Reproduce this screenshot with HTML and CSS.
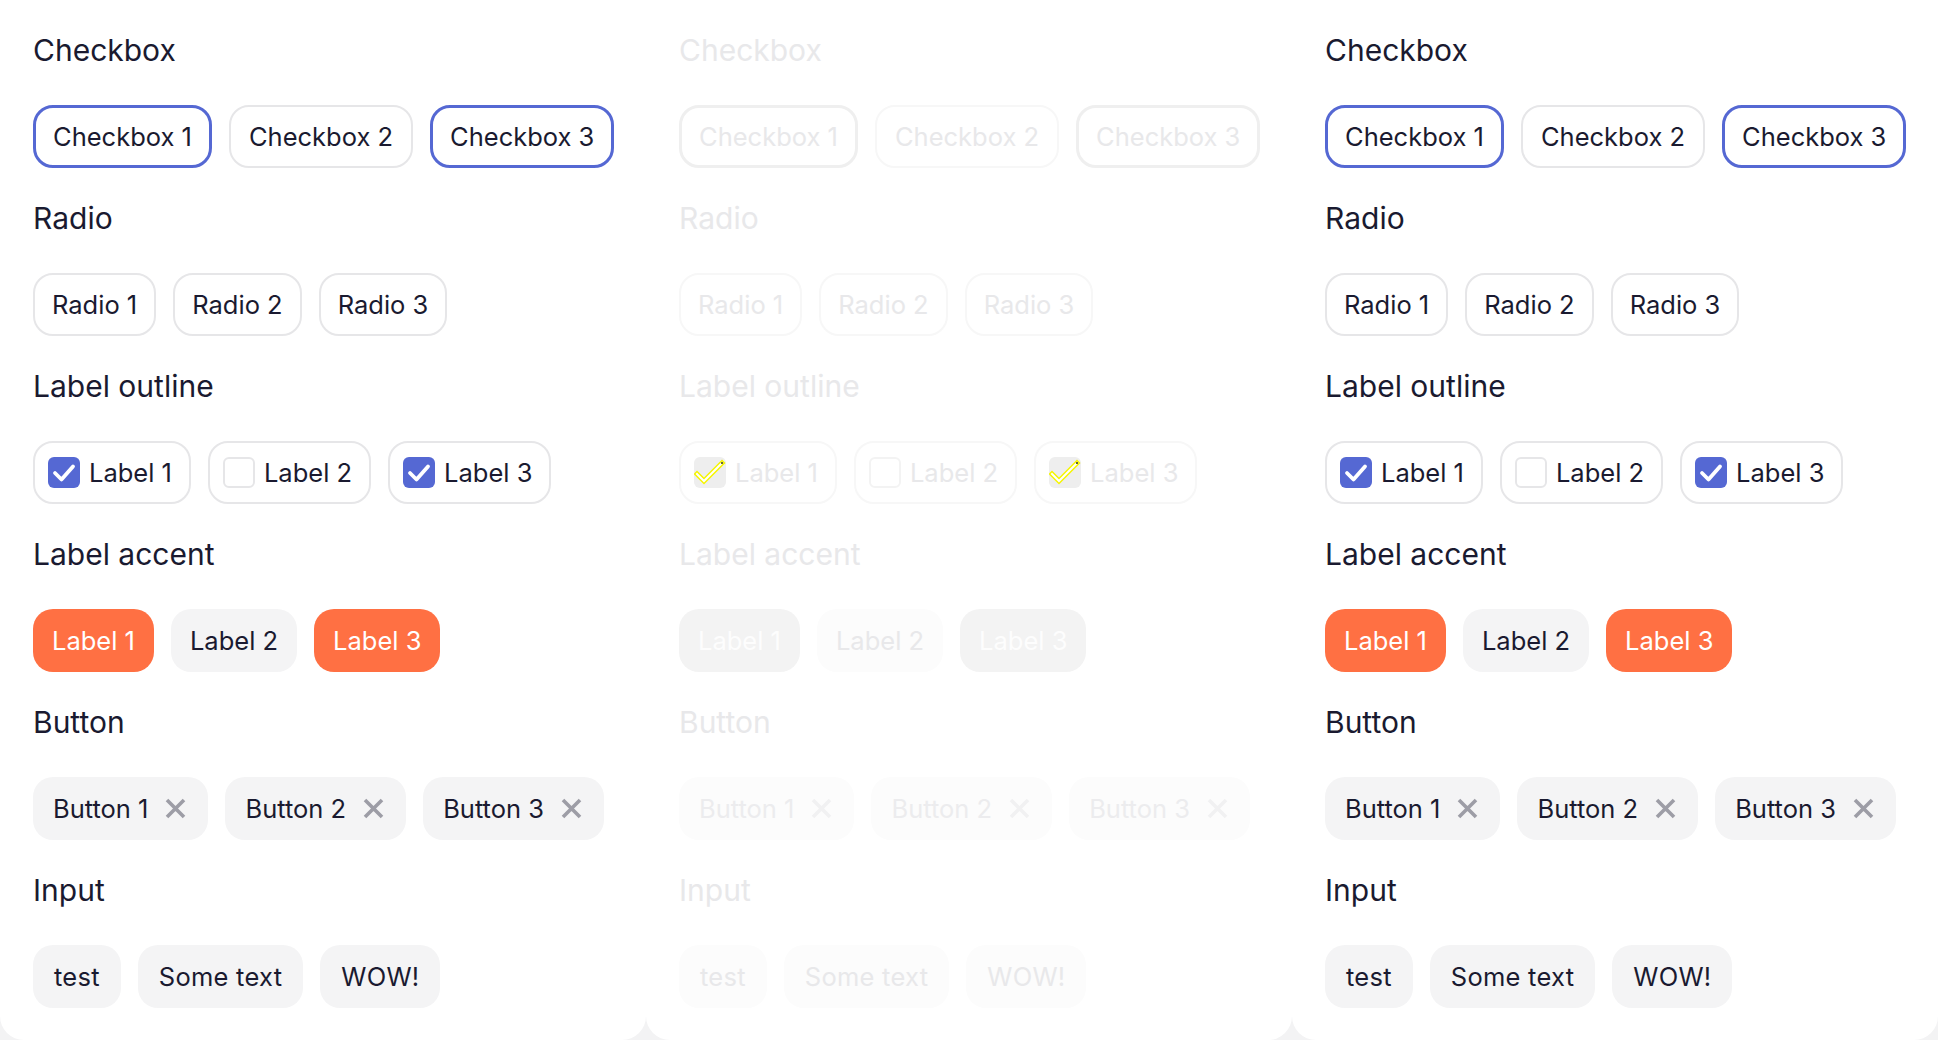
FILE: index.html
```html
<!DOCTYPE html>
<html lang="en">
<head>
<meta charset="utf-8">
<title>Chips</title>
<link rel="stylesheet" href="styles.css">
</head>
<body>
<div class="board">

  <section class="panel">
    <div class="group">
      <h2 class="group-title">Checkbox</h2>
      <div class="chips">
        <span class="chip chip--outline chip--selected">Checkbox 1</span>
        <span class="chip chip--outline chip--roomy">Checkbox 2</span>
        <span class="chip chip--outline chip--selected">Checkbox 3</span>
      </div>
    </div>
    <div class="group">
      <h2 class="group-title">Radio</h2>
      <div class="chips">
        <span class="chip chip--outline">Radio 1</span>
        <span class="chip chip--outline">Radio 2</span>
        <span class="chip chip--outline">Radio 3</span>
      </div>
    </div>
    <div class="group">
      <h2 class="group-title">Label outline</h2>
      <div class="chips">
        <span class="chip chip--outline chip--check"><span class="tick tick--on"><svg class="tick-mark" viewBox="0 0 32 31"><polyline points="7,16 13.5,22.5 25,9.5"/></svg></span>Label 1</span>
        <span class="chip chip--outline chip--check"><span class="tick tick--off"></span>Label 2</span>
        <span class="chip chip--outline chip--check"><span class="tick tick--on"><svg class="tick-mark" viewBox="0 0 32 31"><polyline points="7,16 13.5,22.5 25,9.5"/></svg></span>Label 3</span>
      </div>
    </div>
    <div class="group">
      <h2 class="group-title">Label accent</h2>
      <div class="chips">
        <span class="chip chip--accent">Label 1</span>
        <span class="chip chip--soft">Label 2</span>
        <span class="chip chip--accent">Label 3</span>
      </div>
    </div>
    <div class="group">
      <h2 class="group-title">Button</h2>
      <div class="chips">
        <span class="chip chip--soft chip--button">Button 1<svg class="x-icon" viewBox="0 0 21 21"><path d="M2 2L19 19M19 2L2 19"/></svg></span>
        <span class="chip chip--soft chip--button">Button 2<svg class="x-icon" viewBox="0 0 21 21"><path d="M2 2L19 19M19 2L2 19"/></svg></span>
        <span class="chip chip--soft chip--button">Button 3<svg class="x-icon" viewBox="0 0 21 21"><path d="M2 2L19 19M19 2L2 19"/></svg></span>
      </div>
    </div>
    <div class="group">
      <h2 class="group-title">Input</h2>
      <div class="chips">
        <span class="chip chip--soft chip--input">test</span>
        <span class="chip chip--soft chip--input">Some text</span>
        <span class="chip chip--soft chip--input">WOW!</span>
      </div>
    </div>
  </section>

  <section class="panel panel--disabled">
    <div class="group">
      <h2 class="group-title">Checkbox</h2>
      <div class="chips">
        <span class="chip chip--outline chip--selected">Checkbox 1</span>
        <span class="chip chip--outline chip--roomy">Checkbox 2</span>
        <span class="chip chip--outline chip--selected">Checkbox 3</span>
      </div>
    </div>
    <div class="group">
      <h2 class="group-title">Radio</h2>
      <div class="chips">
        <span class="chip chip--outline">Radio 1</span>
        <span class="chip chip--outline">Radio 2</span>
        <span class="chip chip--outline">Radio 3</span>
      </div>
    </div>
    <div class="group">
      <h2 class="group-title">Label outline</h2>
      <div class="chips">
        <span class="chip chip--outline chip--check"><span class="tick tick--on"><svg class="tick-mark-off" viewBox="0 0 32 31"><polyline class="tick-edge" points="3,17 10,24 28,6"/><polyline class="tick-core" points="3,17 10,24 28,6"/><circle class="tick-dot" cx="28" cy="6" r="1"/></svg></span>Label 1</span>
        <span class="chip chip--outline chip--check"><span class="tick tick--off"></span>Label 2</span>
        <span class="chip chip--outline chip--check"><span class="tick tick--on"><svg class="tick-mark-off" viewBox="0 0 32 31"><polyline class="tick-edge" points="3,17 10,24 28,6"/><polyline class="tick-core" points="3,17 10,24 28,6"/><circle class="tick-dot" cx="28" cy="6" r="1"/></svg></span>Label 3</span>
      </div>
    </div>
    <div class="group">
      <h2 class="group-title">Label accent</h2>
      <div class="chips">
        <span class="chip chip--accent">Label 1</span>
        <span class="chip chip--soft">Label 2</span>
        <span class="chip chip--accent">Label 3</span>
      </div>
    </div>
    <div class="group">
      <h2 class="group-title">Button</h2>
      <div class="chips">
        <span class="chip chip--soft chip--button">Button 1<svg class="x-icon" viewBox="0 0 21 21"><path d="M2 2L19 19M19 2L2 19"/></svg></span>
        <span class="chip chip--soft chip--button">Button 2<svg class="x-icon" viewBox="0 0 21 21"><path d="M2 2L19 19M19 2L2 19"/></svg></span>
        <span class="chip chip--soft chip--button">Button 3<svg class="x-icon" viewBox="0 0 21 21"><path d="M2 2L19 19M19 2L2 19"/></svg></span>
      </div>
    </div>
    <div class="group">
      <h2 class="group-title">Input</h2>
      <div class="chips">
        <span class="chip chip--soft chip--input">test</span>
        <span class="chip chip--soft chip--input">Some text</span>
        <span class="chip chip--soft chip--input">WOW!</span>
      </div>
    </div>
  </section>

  <section class="panel">
    <div class="group">
      <h2 class="group-title">Checkbox</h2>
      <div class="chips">
        <span class="chip chip--outline chip--selected">Checkbox 1</span>
        <span class="chip chip--outline chip--roomy">Checkbox 2</span>
        <span class="chip chip--outline chip--selected">Checkbox 3</span>
      </div>
    </div>
    <div class="group">
      <h2 class="group-title">Radio</h2>
      <div class="chips">
        <span class="chip chip--outline">Radio 1</span>
        <span class="chip chip--outline">Radio 2</span>
        <span class="chip chip--outline">Radio 3</span>
      </div>
    </div>
    <div class="group">
      <h2 class="group-title">Label outline</h2>
      <div class="chips">
        <span class="chip chip--outline chip--check"><span class="tick tick--on"><svg class="tick-mark" viewBox="0 0 32 31"><polyline points="7,16 13.5,22.5 25,9.5"/></svg></span>Label 1</span>
        <span class="chip chip--outline chip--check"><span class="tick tick--off"></span>Label 2</span>
        <span class="chip chip--outline chip--check"><span class="tick tick--on"><svg class="tick-mark" viewBox="0 0 32 31"><polyline points="7,16 13.5,22.5 25,9.5"/></svg></span>Label 3</span>
      </div>
    </div>
    <div class="group">
      <h2 class="group-title">Label accent</h2>
      <div class="chips">
        <span class="chip chip--accent">Label 1</span>
        <span class="chip chip--soft">Label 2</span>
        <span class="chip chip--accent">Label 3</span>
      </div>
    </div>
    <div class="group">
      <h2 class="group-title">Button</h2>
      <div class="chips">
        <span class="chip chip--soft chip--button">Button 1<svg class="x-icon" viewBox="0 0 21 21"><path d="M2 2L19 19M19 2L2 19"/></svg></span>
        <span class="chip chip--soft chip--button">Button 2<svg class="x-icon" viewBox="0 0 21 21"><path d="M2 2L19 19M19 2L2 19"/></svg></span>
        <span class="chip chip--soft chip--button">Button 3<svg class="x-icon" viewBox="0 0 21 21"><path d="M2 2L19 19M19 2L2 19"/></svg></span>
      </div>
    </div>
    <div class="group">
      <h2 class="group-title">Input</h2>
      <div class="chips">
        <span class="chip chip--soft chip--input">test</span>
        <span class="chip chip--soft chip--input">Some text</span>
        <span class="chip chip--soft chip--input">WOW!</span>
      </div>
    </div>
  </section>

</div>
</body>
</html>
```

FILE: styles.css
```css
html, body {
  margin: 0;
  padding: 0;
}

body {
  background: #f3f3f4;
  font-family: Inter, "Noto Sans", "Liberation Sans", sans-serif;
  color: #1a1a30;
  overflow: hidden;
}

.board {
  display: grid;
  grid-template-columns: repeat(3, 646px);
  height: 1040px;
}

.panel {
  background: #ffffff;
  height: 1040px;
  box-sizing: border-box;
  padding: 32px 33px 0;
  border-radius: 0 0 24px 24px;
}

.group {
  margin-bottom: 32px;
}

.group-title {
  margin: 0 0 37px;
  font-size: 30px;
  line-height: 36px;
  font-weight: 400;
}

.chips {
  display: flex;
  gap: 17px;
}

.chip {
  display: inline-flex;
  align-items: center;
  box-sizing: border-box;
  height: 63px;
  padding: 0 17px;
  border: 2px solid transparent;
  border-radius: 20px;
  font-size: 25.5px;
  line-height: 31px;
  white-space: nowrap;
}

.chip--outline {
  background: #ffffff;
  border-color: #e6e6e8;
}

.chip--roomy {
  padding: 0 18px;
}

.chip--selected {
  border: 3px solid #5568d3;
  padding: 0 17px;
}

.chip--check {
  padding-left: 13px;
  gap: 9px;
}

.chip--accent {
  background: #ff7043;
  color: #ffffff;
}

.chip--soft {
  background: #f4f4f5;
}

.chip--button {
  gap: 17px;
  padding: 0 20px 0 18px;
}

.chip--input {
  padding: 0 19px;
  letter-spacing: 0.01em;
}

.tick {
  flex: none;
  display: flex;
  align-items: center;
  justify-content: center;
  box-sizing: border-box;
  width: 32px;
  height: 31px;
  border-radius: 6px;
}

.tick--on {
  background: #5568d3;
}

.tick--off {
  border: 2px solid #e6e6e8;
  background: #ffffff;
}

.tick-mark {
  width: 32px;
  height: 31px;
  fill: none;
  stroke: #ffffff;
  stroke-width: 3.8;
  stroke-linecap: round;
  stroke-linejoin: round;
}

.x-icon {
  flex: none;
  width: 21px;
  height: 21px;
  fill: none;
  stroke: #9d9da6;
  stroke-width: 3.6;
}

/* disabled column */
.panel--disabled {
  color: #e8e8ea;
}

.panel--disabled .chip--outline {
  border-color: #f7f7f7;
}

.panel--disabled .chip--selected {
  border-color: #efefef;
}

.panel--disabled .chip--accent {
  background: #f3f3f3;
  color: #fdfdfd;
}

.panel--disabled .chip--soft {
  background: #fcfcfc;
}

.panel--disabled .chip--button {
  color: #ececee;
}

.panel--disabled .tick--on {
  background: #eeeeee;
}

.panel--disabled .tick--off {
  border-color: #f3f3f3;
}

.panel--disabled .x-icon {
  stroke: #f1f1f2;
}

.tick-mark-off {
  width: 32px;
  height: 31px;
  fill: none;
  stroke-linecap: square;
  stroke-linejoin: miter;
}

.tick-edge {
  stroke: #f5f500;
  stroke-width: 5;
}

.tick-core {
  stroke: #ffffff;
  stroke-width: 2;
}

.tick-dot {
  fill: #333300;
}
```
